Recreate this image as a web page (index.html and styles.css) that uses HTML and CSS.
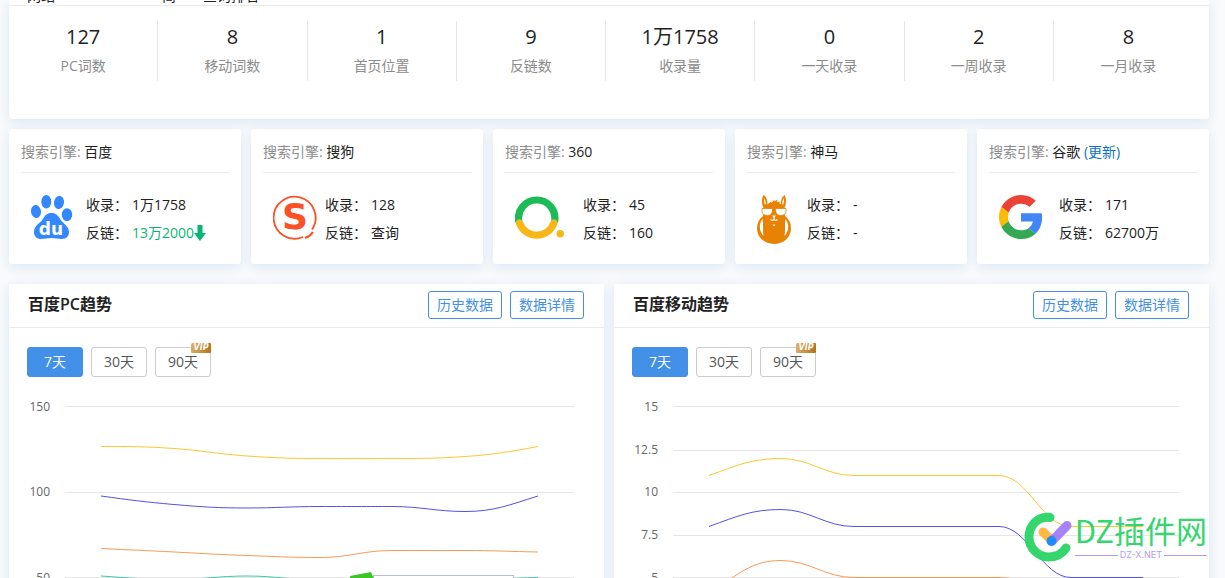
FILE: index.html
```html
<!DOCTYPE html>
<html lang="zh-CN">
<head>
<meta charset="utf-8">
<title>搜索引擎数据</title>
<link rel="stylesheet" href="styles.css">
</head>
<body>
<main class="page">
  <section class="summary card">
    <div class="summary-head"><span class="w1">网站</span><span class="w2">简</span><span>查询排名</span></div>
    <div class="stats">
      <div class="stat"><strong>127</strong><span>PC词数</span></div>
      <div class="stat"><strong>8</strong><span>移动词数</span></div>
      <div class="stat"><strong>1</strong><span>首页位置</span></div>
      <div class="stat"><strong>9</strong><span>反链数</span></div>
      <div class="stat"><strong>1万1758</strong><span>收录量</span></div>
      <div class="stat"><strong>0</strong><span>一天收录</span></div>
      <div class="stat"><strong>2</strong><span>一周收录</span></div>
      <div class="stat"><strong>8</strong><span>一月收录</span></div>
    </div>
  </section>

  <section class="engines">
    <article class="engine card">
      <h3><span>搜索引擎:</span> 百度</h3>
      <div class="engine-body">
        <svg class="logo logo-baidu" viewBox="0 0 42 45" aria-hidden="true">
          <g fill="#3388ff">
            <ellipse cx="5" cy="16.500" rx="5" ry="6.500" transform="rotate(-8 5 16.500)"/>
            <ellipse cx="15.300" cy="6.800" rx="5" ry="6.800"/>
            <ellipse cx="28" cy="7.500" rx="5" ry="6.600" transform="rotate(10 28 7.500)"/>
            <ellipse cx="36" cy="19.700" rx="5.200" ry="6.500"/>
            <path d="M20.500 18C16 18 14 20.500 12 24C9.500 28 3 30.500 3 37C3 41.500 6 44 10 44C14 44 17 43 20.500 43C24 43 27 44 31 44C35.500 44 38 41 38 37C38 31 32 28.500 29.500 24.500C27 20.500 25 18 20.500 18Z"/>
          </g>
          <text class="du" x="20" y="40" text-anchor="middle">du</text>
        </svg>
        <dl>
          <div><dt>收录：</dt><dd>1万1758</dd></div>
          <div><dt>反链：</dt><dd class="down">13万2000<svg class="arrow" viewBox="0 0 12 16" aria-hidden="true"><path d="M3.500 0H8.500V8H12L6 16L0 8H3.500Z" fill="#07b572"/></svg></dd></div>
        </dl>
      </div>
    </article>
    <article class="engine card">
      <h3><span>搜索引擎:</span> 搜狗</h3>
      <div class="engine-body">
        <svg class="logo logo-sogou" viewBox="0 0 44 45" aria-hidden="true">
          <path d="M30 42A21 21 0 1 1 39 34.500" fill="none" stroke="#fb5124" stroke-width="1.800"/>
          <path d="M32 43Q37 41.500 40 37" fill="none" stroke="#fb5124" stroke-width="2.200"/>
          <text class="sogou-s" x="22" y="34" text-anchor="middle">S</text>
        </svg>
        <dl>
          <div><dt>收录：</dt><dd>128</dd></div>
          <div><dt>反链：</dt><dd>查询</dd></div>
        </dl>
      </div>
    </article>
    <article class="engine card">
      <h3><span>搜索引擎:</span> 360</h3>
      <div class="engine-body">
        <svg class="logo logo-360" viewBox="0 0 49 45" aria-hidden="true">
          <path d="M3.900 27A18.200 18.200 0 1 1 39.500 27" fill="none" stroke="#1bbc57" stroke-width="7.200"/>
          <path d="M4.500 28A18.200 18.200 0 0 0 38.900 28" fill="none" stroke="#f8b719" stroke-width="7.200" stroke-linecap="round"/>
          <circle cx="45.200" cy="38.700" r="3.700" fill="#f8b719"/>
        </svg>
        <dl>
          <div><dt>收录：</dt><dd>45</dd></div>
          <div><dt>反链：</dt><dd>160</dd></div>
        </dl>
      </div>
    </article>
    <article class="engine card">
      <h3><span>搜索引擎:</span> 神马</h3>
      <div class="engine-body">
        <svg class="logo logo-sm" viewBox="0 0 34 49" aria-hidden="true">
          <path d="M6.500 13C4 8 5 2 6.500 0C10 2 10.500 6 10.500 9.500C12 8 13 7 14.500 6.500L14.500 8L17.500 4.500L17.500 6.500L20.500 4.500L20 7L23 6.500L22.500 8.500L24 9.500C23.500 5 25 2 27.500 0C29.500 3 29.500 8 27.500 13L28 21C32 24 34 28 34 33C34 42.500 26.500 49 17 49C7.500 49 0 42.500 0 33C0 28 2 24 6 21Z" fill="#e88202"/>
          <path d="M7.800 9.500Q6.300 6 7.300 3Q9 6 8.800 9.500ZM26.200 9.500Q27.700 6 26.700 3Q25 6 25.200 9.500Z" fill="#fff"/>
          <path d="M5 13.500H15.500V16Q14.500 20.500 10.500 20.500Q5.500 20.500 5 16.500ZM18.500 13.500H29V16.500Q28.500 20.500 23.500 20.500Q19.500 20.500 18.500 16Z" fill="#fff" stroke="#e88202" stroke-width=".8"/>
          <path d="M15 20.500H19L17.600 22.600V24.200Q19 25.500 20.500 24L20.700 25.200Q18.500 26.500 17 25.200Q15.500 26.500 13.300 25.200L13.500 24Q15 25.500 16.400 24.200V22.600ZM15.500 29.500H18.500L17 31.500ZM5.500 24C1.500 29 2 36 6.500 41C5.500 35 6.500 29 5.500 24ZM28.500 24C32.500 29 32 36 27.500 41C28.500 35 27.500 29 28.500 24Z" fill="#fff"/>
        </svg>
        <dl>
          <div><dt>收录：</dt><dd>-</dd></div>
          <div><dt>反链：</dt><dd>-</dd></div>
        </dl>
      </div>
    </article>
    <article class="engine card">
      <h3><span>搜索引擎:</span> 谷歌 <a href="#">(更新)</a></h3>
      <div class="engine-body">
        <svg class="logo logo-google" viewBox="0 0 48 48" aria-hidden="true">
          <path fill="#ea4335" d="M24 9.500c3.540 0 6.710 1.220 9.210 3.600l6.850-6.850C35.900 2.380 30.470 0 24 0 14.620 0 6.510 5.380 2.560 13.220l7.980 6.190C12.430 13.720 17.740 9.500 24 9.500z"/>
          <path fill="#4285f4" d="M46.980 24.550c0-1.570-.15-3.090-.38-4.550H24v9.020h12.940c-.58 2.960-2.260 5.480-4.780 7.180l7.730 6c4.510-4.180 7.090-10.360 7.090-17.650z"/>
          <path fill="#fbbc05" d="M10.530 28.590c-.48-1.450-.76-2.990-.76-4.590s.27-3.140.76-4.590l-7.980-6.190C.92 16.460 0 20.120 0 24c0 3.880.92 7.540 2.560 10.780l7.970-6.190z"/>
          <path fill="#34a853" d="M24 48c6.480 0 11.930-2.130 15.890-5.810l-7.730-6c-2.150 1.450-4.920 2.300-8.160 2.300-6.260 0-11.570-4.220-13.470-9.910l-7.980 6.190C6.510 42.620 14.620 48 24 48z"/>
        </svg>
        <dl>
          <div><dt>收录：</dt><dd>171</dd></div>
          <div><dt>反链：</dt><dd>62700万</dd></div>
        </dl>
      </div>
    </article>
  </section>

  <section class="trends">
    <article class="trend card">
      <header><h2>百度PC趋势</h2><button type="button">历史数据</button><button type="button">数据详情</button></header>
      <div class="tabs">
        <button type="button" class="active">7天</button>
        <button type="button">30天</button>
        <button type="button">90天<span class="vip">VIP</span></button>
      </div>
      <svg class="chart" viewBox="0 0 595 222" role="img" aria-label="百度PC趋势">
        <path class="grid" d="M56 19.500H565M56 105.500H565M56 190.500H565"/>
        <g class="axis"><text x="41" y="24">150</text><text x="41" y="109">100</text><text x="41" y="195">50</text></g>
        <path class="line yellow" d="M92 59.500C121 59.500 136 59.500 165 61.500S209 67 238 69S282 71.500 311 71.500S354 71.500 383 71.500S427 71.500 456 69.500S500 65 529 59.500"/>
        <path class="line blue" d="M92 109C121 113 136 115 165 117.500S209 121 238 121S282 119.500 311 119.500S369 119.500 383 119.500C412 119.500 427 124.500 456 124.500S500 118 529 109"/>
        <path class="line orange" d="M92 161.500C121 163 136 163.500 165 165S209 167.500 238 168.500S282 170.500 311 170.500C340 170.500 354 163.500 383 163.500S427 163.500 456 163.500S500 164.500 529 165"/>
        <path class="line teal" d="M92 189C121 191 136 192.500 165 192.500S209 189 238 189S282 193 311 193S354 195 383 195S427 193 456 193S500 191 529 190.500"/>
        <rect x="364.500" y="188.500" width="140" height="60" fill="#fff" stroke="#b5c2cc"/>
        <path d="M341 189L362 185L365 192L341 193Z" fill="#3ec425"/>
      </svg>
    </article>
    <article class="trend card">
      <header><h2>百度移动趋势</h2><button type="button">历史数据</button><button type="button">数据详情</button></header>
      <div class="tabs">
        <button type="button" class="active">7天</button>
        <button type="button">30天</button>
        <button type="button">90天<span class="vip">VIP</span></button>
      </div>
      <svg class="chart" viewBox="0 0 595 222" role="img" aria-label="百度移动趋势">
        <path class="grid" d="M59 19.500H565M59 63.500H565M59 105.500H565M59 148.500H565M59 190.500H565"/>
        <g class="axis"><text x="44" y="24">15</text><text x="44" y="67">12.5</text><text x="44" y="109">10</text><text x="44" y="152">7.5</text><text x="44" y="195">5</text></g>
        <path class="line yellow" d="M95 88.500C124 78 138 71.500 167 71.500S211 88.500 240 88.500H385C414 88.500 428 139.500 457 139.500H529"/>
        <path class="line blue" d="M95 139.500C124 129 138 122.500 167 122.500S211 139.500 240 139.500H385C414 139.500 428 190.500 457 190.500H529"/>
        <path class="line orange" d="M95 207C124 187 138 173.500 167 173.500S211 190.500 240 190.500H385C414 190.500 428 207.500 457 207.500"/>
      </svg>
    </article>
  </section>
</main>
<div class="watermark">
  <svg viewBox="0 0 48 52" aria-hidden="true">
    <g fill="none" stroke-linecap="round">
      <path d="M26 6.500C13 5 5 15 5 26C5 37 14 46 25 46C32 46 38 43 42 37" stroke="#2bd467" stroke-width="9"/>
      <path d="M19 21L26 28" stroke="#ffb638" stroke-width="9"/>
      <path d="M28 30L43 14.500" stroke="#a47cfb" stroke-width="9"/>
    </g>
    <circle cx="27.500" cy="30" r="5" fill="#1785fb"/>
  </svg>
  <div class="mark-text"><b>DZ插件网</b><small>DZ-X.NET</small></div>
</div>
</body>
</html>
```
FILE: styles.css
```css
* { box-sizing: border-box; margin: 0; padding: 0; }
body {
  position: relative;
  height: 100vh;
  overflow: hidden;
  background: #f9fafb;
  color: #222;
  font-family: "Open Sans", "Noto Sans CJK SC", sans-serif;
  font-size: 14px;
}
button { font: inherit; cursor: pointer; }
.page { padding: 0 16px 0 9px; }
.card {
  background: #fff;
  border-radius: 3px;
  box-shadow: 0 3px 12px #d9e6f5;
}

.summary { border-radius: 0 0 3px 3px; padding-bottom: 38px; }
.summary-head {
  display: flex;
  align-items: flex-end;
  height: 6px;
  padding-left: 18px;
  overflow: hidden;
  line-height: 14px;
  padding-bottom: 2px;
  border-bottom: 1px solid #ebebeb;
}
.summary-head .w1 { width: 135px; }
.summary-head .w2 { width: 41px; }
.stats { display: grid; grid-template-columns: repeat(8, 1fr); padding: 15px 6px 0 0; }
.stat {
  display: flex;
  flex-direction: column;
  align-items: center;
  height: 60px;
  border-right: 1px solid #e6e6e6;
}
.stat:last-child { border-right: 0; }
.stat strong { font-size: 20px; font-weight: 400; line-height: 32px; }
.stat span { color: #8c8c8c; line-height: 26px; }

.engines { display: grid; grid-template-columns: repeat(5, 1fr); gap: 10px; margin-top: 10px; }
.engine { padding: 0 12px 17px; }
.engine h3 {
  height: 44px;
  line-height: 46px;
  font-size: 14px;
  font-weight: 400;
  border-bottom: 1px solid #ebebeb;
  white-space: nowrap;
}
.engine h3 span { color: #8c8c8c; }
.engine a { color: #0a72c8; text-decoration: none; }
.engine-body { display: flex; align-items: flex-start; padding: 18px 0 0 10px; }
.logo { flex: none; margin-top: 4px; }
.logo-baidu { width: 42px; margin-right: 13px; }
.logo-sogou { width: 44px; margin-right: 8px; }
.logo-360 { width: 49px; margin-right: 19px; }
.logo-sm { width: 34px; margin-right: 16px; }
.logo-google { width: 44px; margin-right: 16px; }
.du { font: 700 17px "DejaVu Sans", sans-serif; fill: #fff; }
.sogou-s { font: 700 36px "DejaVu Sans", sans-serif; fill: #fb5124; }
.engine dl div { display: flex; line-height: 28px; white-space: nowrap; }
.engine dt { width: 46px; }
.down { display: flex; align-items: center; color: #07b572; }
.arrow { width: 12px; height: 16px; }

.trends { display: grid; grid-template-columns: 1fr 1fr; gap: 10px; margin-top: 20px; }
.trend { border-radius: 0; }
.trend header {
  display: flex;
  align-items: center;
  gap: 8px;
  height: 44px;
  padding: 0 20px 2px 19px;
  border-bottom: 1px solid #ebebeb;
}
.trend h2 { flex: 1; font-size: 16px; font-weight: 600; line-height: 24px; padding-bottom: 2px; }
.trend header button {
  height: 28px;
  padding: 0 8px;
  border: 1px solid #4290e7;
  border-radius: 3px;
  background: #fff;
  color: #4290e7;
  line-height: 24px;
}
.tabs { display: flex; gap: 8px; padding: 19px 18px 10px; }
.tabs button {
  position: relative;
  width: 56px;
  height: 30px;
  border: 1px solid #ccc;
  border-radius: 3px;
  background: #fff;
  color: #555;
  line-height: 26px;
}
.tabs .active { border-color: #4290e7; background: #4290e7; color: #fff; }
.vip {
  position: absolute;
  top: -5px;
  right: -1px;
  width: 20px;
  height: 10px;
  border-radius: 2px 1px 1px 1px;
  background: linear-gradient(100deg, #e0b068, #b4721c);
  color: #fff;
  font: italic 700 8px/10px "DejaVu Sans", sans-serif;
  text-align: center;
}
.chart { display: block; width: 100%; }
.grid { fill: none; stroke: #e6e6e6; }
.axis { fill: #666; font-size: 12px; text-anchor: end; }
.line { fill: none; stroke-width: 1; }
.yellow { stroke: #fac832; }
.blue { stroke: #5450e4; }
.orange { stroke: #fa9a55; }
.teal { stroke: #40c8a8; }

.watermark {
  position: absolute;
  top: 511px;
  right: 18px;
  display: flex;
  align-items: flex-start;
  gap: 3px;
}
.watermark svg { width: 48px; height: 52px; opacity: 0.95; }
.mark-text { display: flex; flex-direction: column; }
.mark-text b { color: #2bd467; font: 400 31px/38px "Noto Sans CJK SC", sans-serif; opacity: 0.95; }
.mark-text small {
  display: flex;
  align-items: center;
  gap: 2px;
  color: #b49af8;
  font: 9px/12px "Inter", sans-serif;
}
.mark-text small::before, .mark-text small::after { content: ""; flex: 1; height: 1px; background: #b49af8; }
```
